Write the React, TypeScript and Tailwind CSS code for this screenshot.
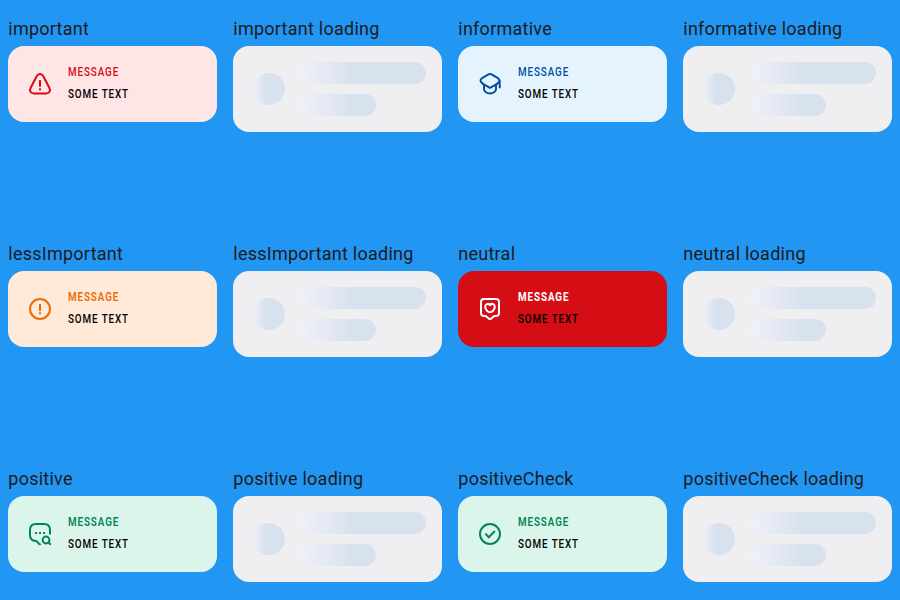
import React from 'react';

type Kind = 'important' | 'informative' | 'lessImportant' | 'neutral' | 'positive' | 'positiveCheck';

const styles: Record<Kind, { card: string; tone: string; title: string }> = {
  important: { card: 'bg-[#ffe5e6]', tone: 'text-[#d60d17]', title: 'font-medium' },
  informative: { card: 'bg-[#e5f3ff]', tone: 'text-[#00509f]', title: 'font-medium' },
  lessImportant: { card: 'bg-[#ffe9d9]', tone: 'text-[#f06a00]', title: 'font-semibold' },
  neutral: { card: 'bg-[#d50d15]', tone: 'text-white', title: 'font-bold' },
  positive: { card: 'bg-[#dcf5eb]', tone: 'text-[#008558]', title: 'font-semibold' },
  positiveCheck: { card: 'bg-[#dcf5eb]', tone: 'text-[#008558]', title: 'font-semibold' },
};

const glyphs: Record<Kind, React.ReactNode> = {
  important: (
    <>
      <path d="M8.7 4.2C10.3 1.3 13.7 1.3 15.3 4.2L21.2 15.4C23 18.6 21.6 21.4 18 21.4H6C2.4 21.4 1 18.6 2.8 15.4Z" />
      <path d="M12 8V14.8M12 16.3V18.2" />
    </>
  ),
  informative: (
    <>
      <path d="M10.9 2.2Q12 1.6 13.1 2.2L20 6.2Q22.6 8 20.6 10.5C18.4 13 14.8 13.9 13.2 15.2Q12 16.4 10.8 15.2C9.2 13.9 5.6 13 3.4 10.5Q1.4 8 4 6.2Z" />
      <path d="M6 12.6V17Q6 19 7.6 20Q12 23 16.4 20Q18 19 18 17V12.6M21.7 8.5V16.2" />
    </>
  ),
  lessImportant: (
    <>
      <circle cx="12" cy="12" r="10" />
      <path d="M12 7V14M12 15.2V17.2" />
    </>
  ),
  neutral: (
    <>
      <path d="M6 2H18Q21 2 21 5V16Q21 19 18 19H16.8Q16 19 15.3 19.7L12.7 22Q12 22.5 11.3 22L8.7 19.7Q8 19 7.2 19H6Q3 19 3 16V5Q3 2 6 2Z" />
      <path d="M12 8C10 5.8 7 7.2 7.2 10.2C7.5 13 10 15.3 12 15.3S16.5 13 16.8 10.2C17 7.2 14 5.8 12 8Z" />
    </>
  ),
  positive: (
    <>
      <path d="M22 12.5V8Q22 2 16 2H8Q2 2 2 8V13Q2 18.7 7.8 19Q9.1 19.1 9.7 20.2L10.6 21.5Q11.4 22.6 12.7 21.8" />
      <circle cx="18" cy="18" r="3.4" />
      <path d="M20.4 20.4L22.8 22.8" />
      <path d="M7 11H9M11 11H13M15 11H17" />
    </>
  ),
  positiveCheck: (
    <>
      <circle cx="12" cy="12" r="10" />
      <path d="M7.3 11.6L10.8 15.2L16.9 9" />
    </>
  ),
};

function Label({ children }: { children: React.ReactNode }) {
  return <div className="h-[30px] whitespace-nowrap pl-[0.3px] pt-0.5 text-[18px] leading-[21px] tracking-[0.25px] text-[#1d1b20]">{children}</div>;
}

function Message({ kind }: { kind: Kind }) {
  const s = styles[kind];
  return (
    <div className="h-[225px] w-[209px]">
      <Label>{kind}</Label>
      <div className={`flex h-[76px] items-center rounded-[16px] pl-5 ${s.card}`}>
        <svg className={`size-6 ${s.tone}`} viewBox="0 0 24 24" fill="none" stroke="currentColor" strokeWidth="2">
          {glyphs[kind]}
        </svg>
        <div className="mb-0.5 ml-[16.3px] text-[12px] leading-[22px]">
          <div className={`origin-left scale-x-[0.82] tracking-[1.1px] ${s.tone} ${s.title}`}>MESSAGE</div>
          <div className="origin-left scale-x-[0.82] font-medium tracking-[1.1px] text-black">SOME TEXT</div>
        </div>
      </div>
    </div>
  );
}

function Loading({ kind }: { kind: Kind }) {
  return (
    <div className="h-[225px] w-[209px]">
      <Label>{kind} loading</Label>
      <div className="flex h-[86px] items-center rounded-[16px] bg-[#efeff1] pl-5">
        <div className="size-8 rounded-full bg-[linear-gradient(90deg,#eff1f8_0px,#e4e8f2_6px,#d8e2ee_13px)]" />
        <div className="ml-4 flex flex-col gap-2.5">
          <div className="h-[22px] w-[125px] rounded-full bg-[linear-gradient(90deg,#eff1f8_0px,#e5e9f4_24px,#d8e2ee_50px)]" />
          <div className="h-[22px] w-[75px] rounded-full bg-[linear-gradient(90deg,#eff1f8_0px,#e5e9f4_24px,#d8e2ee_50px)]" />
        </div>
      </div>
    </div>
  );
}

const kinds: Kind[] = ['important', 'informative', 'lessImportant', 'neutral', 'positive', 'positiveCheck'];

export default function App() {
  return (
    <main className="grid h-[600px] w-[900px] grid-cols-4 content-start gap-x-4 overflow-hidden bg-[#2196f3] px-2 pt-4 font-[Roboto,sans-serif]">
      {kinds.map((kind) => (
        <React.Fragment key={kind}>
          <Message kind={kind} />
          <Loading kind={kind} />
        </React.Fragment>
      ))}
    </main>
  );
}
